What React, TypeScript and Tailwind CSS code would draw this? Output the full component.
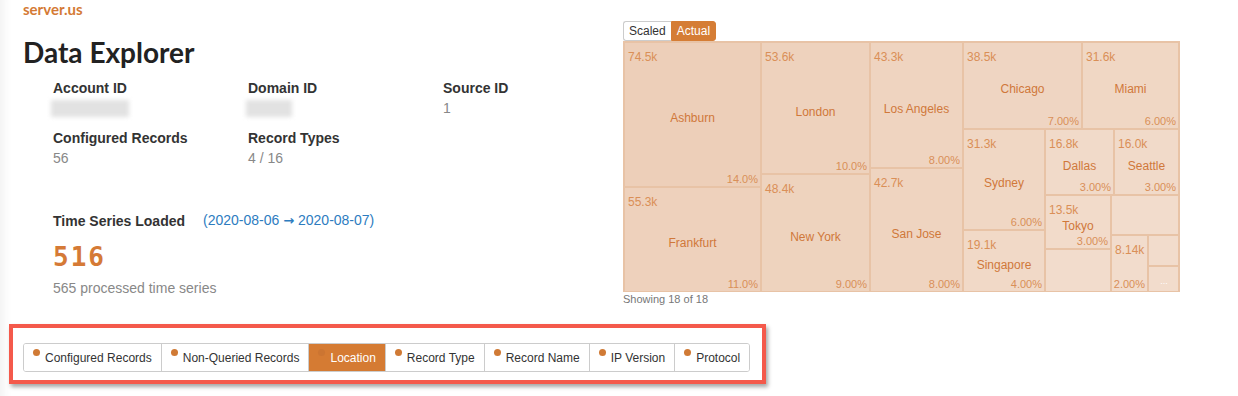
import React from 'react'

type Cell = {
  x0: number
  y0: number
  x1: number
  y1: number
  name?: string
  value?: string
  pct?: string
  fill: string
}

const cells: Cell[] = [
  { x0: 0, y0: 0, x1: 137, y1: 145, name: 'Ashburn', value: '74.5k', pct: '14.0%', fill: '#edcfb9' },
  { x0: 0, y0: 145, x1: 137, y1: 250, name: 'Frankfurt', value: '55.3k', pct: '11.0%', fill: '#eed1bc' },
  { x0: 137, y0: 0, x1: 246, y1: 132, name: 'London', value: '53.6k', pct: '10.0%', fill: '#eed2bd' },
  { x0: 137, y0: 132, x1: 246, y1: 250, name: 'New York', value: '48.4k', pct: '9.00%', fill: '#eed3be' },
  { x0: 246, y0: 0, x1: 339, y1: 126, name: 'Los Angeles', value: '43.3k', pct: '8.00%', fill: '#efd4c0' },
  { x0: 246, y0: 126, x1: 339, y1: 250, name: 'San Jose', value: '42.7k', pct: '8.00%', fill: '#efd4c0' },
  { x0: 339, y0: 0, x1: 458, y1: 87, name: 'Chicago', value: '38.5k', pct: '7.00%', fill: '#efd5c2' },
  { x0: 458, y0: 0, x1: 555, y1: 87, name: 'Miami', value: '31.6k', pct: '6.00%', fill: '#f0d7c4' },
  { x0: 339, y0: 87, x1: 421, y1: 188, name: 'Sydney', value: '31.3k', pct: '6.00%', fill: '#f0d7c4' },
  { x0: 339, y0: 188, x1: 421, y1: 250, name: 'Singapore', value: '19.1k', pct: '4.00%', fill: '#f1d9c7' },
  { x0: 421, y0: 87, x1: 490, y1: 153, name: 'Dallas', value: '16.8k', pct: '3.00%', fill: '#f1dac9' },
  { x0: 490, y0: 87, x1: 555, y1: 153, name: 'Seattle', value: '16.0k', pct: '3.00%', fill: '#f1dac9' },
  { x0: 421, y0: 153, x1: 487, y1: 207, name: 'Tokyo', value: '13.5k', pct: '3.00%', fill: '#f2dbca' },
  { x0: 421, y0: 207, x1: 487, y1: 250, fill: '#f2dccc' },
  { x0: 487, y0: 153, x1: 555, y1: 193, fill: '#f2dccc' },
  { x0: 487, y0: 193, x1: 524, y1: 250, value: '8.14k', pct: '2.00%', fill: '#f2dccc' },
  { x0: 524, y0: 193, x1: 555, y1: 224, fill: '#f2dccc' },
  { x0: 524, y0: 224, x1: 555, y1: 250, fill: '#f2dccc' },
]

const Treemap = () => (
  <svg width={557} height={251} viewBox="-1 -1 557 251" className="block" style={{ fontFamily: '"Liberation Sans", Arial, sans-serif' }}>
    {cells.map((c, i) => {
      const cx = (c.x0 + c.x1) / 2
      const cy = (c.y0 + c.y1) / 2
      return (
        <g key={i}>
          <rect x={c.x0} y={c.y0} width={c.x1 - c.x0} height={c.y1 - c.y0} fill={c.fill} stroke="#e8c3a6" strokeWidth={2} />
          {c.value && (
            <text x={c.x0 + 4} y={c.y0 + 19} fontSize={12} fill="#da8f57">
              {c.value}
            </text>
          )}
          {c.name && (
            <text x={cx} y={cy + 7.5} fontSize={12} fill="#d0783a" textAnchor="middle">
              {c.name}
            </text>
          )}
          {c.pct && (
            <text x={c.x1 - 3} y={c.y1 - 4} fontSize={11} fill="#d98f58" textAnchor="end">
              {c.pct}
            </text>
          )}
        </g>
      )
    })}
    <text x={540} y={242} fontSize={9} fill="#ffffff" textAnchor="middle">
      ...
    </text>
  </svg>
)

const Info = ({ label, children }: { label: string; children: React.ReactNode }) => (
  <div className="flex flex-col">
    <div className="text-[14px] leading-[20px] font-bold text-[#333]">{label}</div>
    <div className="text-[14px] leading-[20px] text-[#888] h-[20px] flex items-center">{children}</div>
  </div>
)

const Blur = ({ w }: { w: string }) => <div className={`${w} h-[17px] bg-[#e2e2e2] blur-[2px] -ml-[2px]`}></div>

const tabs = ['Configured Records', 'Non-Queried Records', 'Location', 'Record Type', 'Record Name', 'IP Version', 'Protocol']

export default function App() {
  return (
    <div className="w-[1238px] h-[396px] bg-white overflow-hidden font-['Liberation_Sans',Arial,sans-serif] shadow-[inset_14px_0_12px_-12px_rgba(0,0,0,0.07)]">
      <div className="flex h-[324px]">
        <div className="w-[623px] pl-[23px]">
          <div className="font-['Lato',sans-serif] font-bold text-[15px] leading-[18px] text-[#d47a35]">server.us</div>
          <h1 className="mt-[17px] font-['Lato',sans-serif] font-bold text-[28px] leading-[34px] text-[#222]">Data Explorer</h1>

          <div className="mt-[9px] ml-[30px] grid grid-cols-[195px_195px_195px] gap-y-[10px]">
            <Info label="Account ID">
              <Blur w="w-[78px]" />
            </Info>
            <Info label="Domain ID">
              <Blur w="w-[46px]" />
            </Info>
            <Info label="Source ID">1</Info>
            <Info label="Configured Records">56</Info>
            <Info label="Record Types">4 / 16</Info>
          </div>

          <div className="ml-[30px] mt-[42px]">
            <div className="flex items-center text-[14px] leading-[20px]">
              <span className="font-bold text-[#333]">Time Series Loaded</span>
              <span className="ml-[18px] text-[#2d7cbf]">
                (2020-08-06 <span className="font-['DejaVu_Sans',sans-serif] font-bold text-[13px]">→</span> 2020-08-07)
              </span>
            </div>
            <div className="mt-[11px] font-['DejaVu_Sans_Mono',monospace] font-bold text-[26px] leading-[30px] tracking-[2px] text-[#d57a36]">516</div>
            <div className="mt-[6px] text-[14px] leading-[20px] text-[#888]">565 processed time series</div>
          </div>
        </div>

        <div className="pt-[21px] w-[560px]">
          <div className="flex text-[12px] leading-[18px]">
            <button className="px-[5px] border border-[#cccccc] border-r-0 rounded-l-[3px] bg-white text-[#333]">Scaled</button>
            <button className="px-[5px] border border-[#d57d35] rounded-r-[3px] bg-[#d57d35] text-white">Actual</button>
          </div>
          <Treemap />
          <div className="text-[11px] leading-[14px] text-[#777]">Showing 18 of 18</div>
        </div>
      </div>

      <div className="ml-[9px] w-[757px] border-[4px] border-[#f4594b] pl-[10px] pt-[15px] pb-[8px] shadow-[2px_3px_4px_rgba(0,0,0,0.35)]">
        <div className="flex w-fit h-[29px] border border-[#cccccc] rounded-[3px] overflow-hidden text-[12px]">
          {tabs.map((t, i) => {
            const active = t === 'Location'
            return (
              <div
                key={t}
                className={
                  'flex items-center pl-[9px] pr-[9px] ' +
                  (i > 0 ? 'border-l border-[#cccccc] ' : '') +
                  (active ? 'bg-[#d57b33] text-white' : 'bg-white text-[#333]')
                }
              >
                <span className={'w-[7px] h-[7px] rounded-full mr-[5px] mb-[10px] ' + (active ? 'bg-[#cc7532]' : 'bg-[#d07a35]')}></span>
                <span>{t}</span>
              </div>
            )
          })}
        </div>
      </div>
    </div>
  )
}
